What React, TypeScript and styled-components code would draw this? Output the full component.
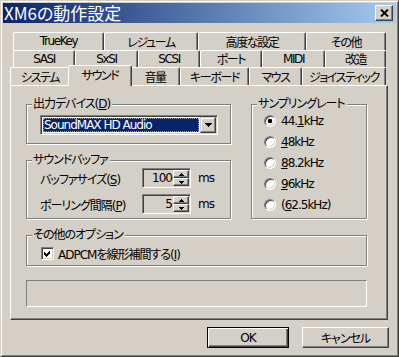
import React from 'react';
import styled, { createGlobalStyle, css } from 'styled-components';

const GlobalStyle = createGlobalStyle`
  html, body {
    margin: 0;
    padding: 0;
    background: #d4d0c8;
  }
  body {
    font-family: "DejaVu Sans", "Noto Sans CJK JP", sans-serif;
    font-size: 12px;
    color: #000;
    font-feature-settings: "palt" 1;
    letter-spacing: -1px;
  }
  * {
    box-sizing: border-box;
  }
`;

const raised = css`
  border: 1px solid;
  border-color: #fff #404040 #404040 #fff;
  box-shadow: inset -1px -1px 0 #808080, inset 1px 1px 0 #d4d0c8;
  background: #d4d0c8;
`;

const sunken = css`
  border: 1px solid;
  border-color: #808080 #fff #fff #808080;
  box-shadow: inset 1px 1px 0 #404040, inset -1px -1px 0 #d4d0c8;
`;

const Window = styled.div`
  width: 399px;
  height: 357px;
  background: #d4d0c8;
  border: 1px solid;
  border-color: #d4d0c8 #404040 #404040 #d4d0c8;
  box-shadow: inset 1px 1px 0 #fff, inset -1px -1px 0 #808080;
  padding: 2px;
  display: flex;
  flex-direction: column;
`;

const TitleBar = styled.div`
  height: 20px;
  flex: none;
  display: flex;
  align-items: center;
  justify-content: space-between;
  padding: 0 3px 0 1px;
  background: linear-gradient(to right, #0a246a, #a6caf0);
`;

const Title = styled.span`
  color: #fff;
  font-family: "Noto Sans CJK JP", sans-serif;
  font-size: 17px;
  line-height: 20px;
  letter-spacing: 0;
  white-space: nowrap;
`;

const CloseButton = styled.div`
  ${raised};
  width: 18px;
  height: 16px;
  display: flex;
  align-items: center;
  justify-content: center;
`;

const Body = styled.div`
  flex: 1;
  padding: 9px 8px 0 7px;
  display: flex;
  flex-direction: column;
`;

const TabRow = styled.div<{ $h: number; $indent: number }>`
  display: flex;
  height: ${p => p.$h}px;
  padding-left: ${p => p.$indent}px;
  position: relative;
  z-index: 1;
`;

const Tab = styled.div<{ $w: number; $active?: boolean }>`
  width: ${p => p.$w}px;
  height: 100%;
  flex: none;
  display: flex;
  align-items: center;
  justify-content: center;
  padding-bottom: 1px;
  white-space: nowrap;
  letter-spacing: -1.4px;
  background: #d4d0c8;
  border-top: 1px solid #fff;
  border-left: 1px solid #fff;
  border-right: 1px solid #404040;
  box-shadow: inset -1px 0 0 #808080;
  border-top-left-radius: 2px;
  border-top-right-radius: 2px;
  ${p => p.$active && css`
    width: ${p.$w + 4}px;
    height: calc(100% + 3px);
    margin: -2px -2px 0;
    padding-bottom: 4px;
    position: relative;
    z-index: 2;
  `}
`;

const Panel = styled.div`
  height: 235px;
  flex: none;
  border: 1px solid;
  border-color: #fff #404040 #404040 #fff;
  box-shadow: inset -1px -1px 0 #808080;
  padding: 11px 19px 0 15px;
  display: grid;
  grid-template-columns: 205px 116px;
  column-gap: 20px;
  align-content: start;
`;

const Column = styled.div`
  display: flex;
  flex-direction: column;
  gap: 9px;
`;

const Group = styled.fieldset<{ $wide?: boolean }>`
  margin: 0;
  padding: 0;
  min-width: 0;
  border: 1px solid #808080;
  box-shadow: inset 1px 1px 0 #fff, 1px 1px 0 #fff;
  ${p => p.$wide && css`
    grid-column: 1 / -1;
    margin-top: 9px;
  `}
`;

const Legend = styled.legend`
  margin-left: 5px;
  padding: 0 2px 0 1px;
  height: 14px;
  line-height: 14px;
  background: #d4d0c8;
  white-space: nowrap;
`;

const GroupBody = styled.div<{ $pad: string; $shift?: number }>`
  padding: ${p => p.$pad};
  margin-top: ${p => p.$shift ?? 0}px;
  display: flex;
  flex-direction: column;
`;

const Combo = styled.div`
  ${sunken};
  width: 178px;
  height: 20px;
  padding: 1px;
  display: flex;
  background: #fff;
`;

const ComboValue = styled.div`
  flex: 1;
  margin: 1px;
  padding-left: 1px;
  background: #0a246a;
  color: #fff;
  line-height: 14px;
  outline: 1px dotted #a0a0a0;
  outline-offset: -1px;
  white-space: nowrap;
`;

const DropButton = styled.div`
  ${raised};
  width: 16px;
  display: flex;
  align-items: center;
  justify-content: center;
  border-color: #d4d0c8 #404040 #404040 #d4d0c8;
  box-shadow: inset -1px -1px 0 #808080, inset 1px 1px 0 #fff;
`;

const FieldRow = styled.div`
  display: flex;
  align-items: center;
  height: 20px;
  & + & {
    margin-top: 6px;
  }
`;

const FieldLabel = styled.span`
  width: 102px;
  white-space: nowrap;
`;

const Spin = styled.div`
  ${sunken};
  width: 49px;
  height: 20px;
  padding: 1px;
  display: flex;
  background: #d4d0c8;
`;

const SpinValue = styled.div`
  flex: 1;
  text-align: right;
  line-height: 16px;
  padding-right: 1px;
`;

const SpinArrows = styled.div`
  width: 16px;
  display: flex;
  flex-direction: column;
`;

const SpinButton = styled.div`
  ${raised};
  flex: 1;
  display: flex;
  align-items: center;
  justify-content: center;
`;

const Unit = styled.span`
  margin-left: 7px;
`;

const RadioRow = styled.div`
  display: flex;
  align-items: center;
  gap: 5px;
  height: 21px;
  white-space: nowrap;
`;

const Radio = styled.span<{ $checked?: boolean }>`
  width: 12px;
  height: 12px;
  flex: none;
  border-radius: 50%;
  border: 1px solid;
  border-color: #808080 #fff #fff #808080;
  box-shadow: inset 1px 1px 0 #404040, inset -1px -1px 0 #d4d0c8;
  background: ${p => p.$checked
    ? 'radial-gradient(circle, #000 0, #000 2px, #fff 2.6px)'
    : '#fff'};
`;

const CheckRow = styled.div`
  display: flex;
  align-items: center;
  gap: 4px;
  height: 13px;
  white-space: nowrap;
`;

const CheckBox = styled.span`
  ${sunken};
  width: 13px;
  height: 13px;
  flex: none;
  background: #fff;
  display: flex;
  align-items: center;
  justify-content: center;
`;

const StatusBox = styled.div`
  grid-column: 1 / -1;
  margin-top: 14px;
  height: 27px;
  border: 1px solid;
  border-color: #808080 #fff #fff #808080;
`;

const ButtonRow = styled.div`
  display: flex;
  justify-content: flex-end;
  gap: 13px;
  margin: 7px -1px 0 0;
`;

const Button = styled.div<{ $w: number; $default?: boolean }>`
  ${raised};
  width: ${p => p.$w}px;
  height: 21px;
  display: flex;
  align-items: center;
  justify-content: center;
  ${p => p.$default && css`
    border-color: #000;
    box-shadow: inset 1px 1px 0 #fff, inset -1px -1px 0 #404040, inset -2px -2px 0 #808080;
  `}
`;

const tabRows: { indent: number; h: number; tabs: [string, number][] }[] = [
  { indent: 3, h: 18, tabs: [['TrueKey', 91], ['レジューム', 94], ['高度な設定', 108], ['その他', 80]] },
  { indent: 3, h: 17, tabs: [['SASI', 62], ['SxSI', 63], ['SCSI', 62], ['ポート', 62], ['MIDI', 63], ['改造', 61]] },
  { indent: 0, h: 18, tabs: [['システム', 60], ['サウンド', 60], ['音量', 50], ['キーボード', 69], ['マウス', 53], ['ジョイスティック', 84]] },
];

const rates: React.ReactNode[] = [
  <>44.<u>1</u>kHz</>,
  <><u>4</u>8kHz</>,
  <><u>8</u>8.2kHz</>,
  <><u>9</u>6kHz</>,
  <>(<u>6</u>2.5kHz)</>,
];

const Arrow = ({ up, w = 7, h = 4 }: { up?: boolean; w?: number; h?: number }) => (
  <svg width={w} height={h} viewBox={`0 0 ${w} ${h}`} shapeRendering="crispEdges">
    <path
      d={up ? `M${w / 2} 0L${w} ${h}H0Z` : `M0 0H${w}L${w / 2} ${h}Z`}
      fill="#000"
    />
  </svg>
);

const SpinBox = ({ value }: { value: string }) => (
  <Spin>
    <SpinValue>{value}</SpinValue>
    <SpinArrows>
      <SpinButton><Arrow up w={5} h={3} /></SpinButton>
      <SpinButton><Arrow w={5} h={3} /></SpinButton>
    </SpinArrows>
  </Spin>
);

export default function App() {
  return (
    <>
      <GlobalStyle />
      <Window>
        <TitleBar>
          <Title>XM6の動作設定</Title>
          <CloseButton>
            <svg width="9" height="8" viewBox="0 0 9 8">
              <path d="M1 0.5L8 7.5M8 0.5L1 7.5" stroke="#000" strokeWidth="1.8" />
            </svg>
          </CloseButton>
        </TitleBar>

        <Body>
          {tabRows.map((row, i) => (
            <TabRow key={i} $h={row.h} $indent={row.indent}>
              {row.tabs.map(([label, w]) => (
                <Tab key={label} $w={w} $active={label === 'サウンド'}>{label}</Tab>
              ))}
            </TabRow>
          ))}

          <Panel>
            <Column>
              <Group>
                <Legend>出力デバイス(<u>D</u>)</Legend>
                <GroupBody $pad="4px 13px 8px">
                  <Combo>
                    <ComboValue>SoundMAX HD Audio</ComboValue>
                    <DropButton><Arrow /></DropButton>
                  </Combo>
                </GroupBody>
              </Group>
              <Group>
                <Legend>サウンドバッファ</Legend>
                <GroupBody $pad="1px 13px 4px">
                  <FieldRow>
                    <FieldLabel>バッファサイズ(<u>S</u>)</FieldLabel>
                    <SpinBox value="100" />
                    <Unit>ms</Unit>
                  </FieldRow>
                  <FieldRow>
                    <FieldLabel>ポーリング間隔(<u>P</u>)</FieldLabel>
                    <SpinBox value="5" />
                    <Unit>ms</Unit>
                  </FieldRow>
                </GroupBody>
              </Group>
            </Column>

            <Group>
              <Legend>サンプリングレート</Legend>
              <GroupBody $pad="0 4px 0 12px" $shift={-1}>
                {rates.map((r, i) => (
                  <RadioRow key={i}>
                    <Radio $checked={i === 0} />
                    <span>{r}</span>
                  </RadioRow>
                ))}
              </GroupBody>
            </Group>

            <Group $wide>
              <Legend>その他のオプション</Legend>
              <GroupBody $pad="5px 12px 5px 14px">
                <CheckRow>
                  <CheckBox>
                    <svg width="7" height="7" viewBox="0 0 7 7" shapeRendering="crispEdges">
                      <path d="M0 2L2 4L6 0V3L2 7L0 5Z" fill="#000" />
                    </svg>
                  </CheckBox>
                  <span>ADPCMを線形補間する(<u>I</u>)</span>
                </CheckRow>
              </GroupBody>
            </Group>

            <StatusBox />
          </Panel>

          <ButtonRow>
            <Button $w={82} $default>OK</Button>
            <Button $w={87}>キャンセル</Button>
          </ButtonRow>
        </Body>
      </Window>
    </>
  );
}
